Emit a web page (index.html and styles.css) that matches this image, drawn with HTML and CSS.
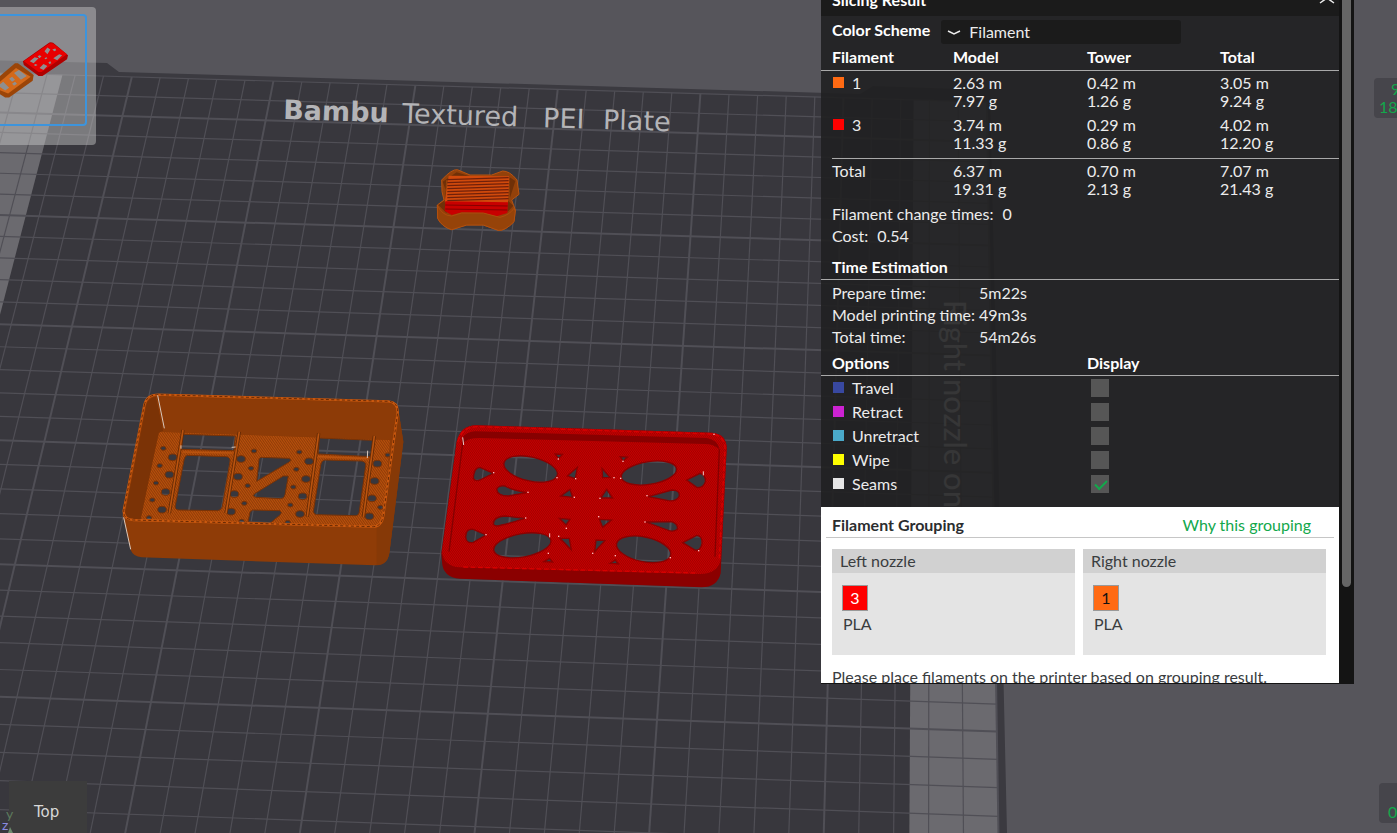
FILE: index.html
```html
<!DOCTYPE html>
<html lang="en">

<head>
    <meta charset="UTF-8">
    <meta name="viewport" content="width=device-width, initial-scale=1.0">
    <title>Slicing preview</title>
    <link rel="stylesheet" href="styles.css">
</head>

<body>
    <main class="preview">
        <svg class="scene" viewBox="0 0 1397 833" preserveAspectRatio="xMinYMin slice" aria-hidden="true">
            <defs>
                <pattern id="hatchOrange" width="6" height="6" patternUnits="userSpaceOnUse" patternTransform="rotate(-35)">
                    <rect width="6" height="6" fill="#b9500c" />
                    <rect width="2" height="6" fill="#7b3306" />
                </pattern>
                <pattern id="hatchRed" width="5" height="5" patternUnits="userSpaceOnUse" patternTransform="rotate(-35)">
                    <rect width="5" height="5" fill="#c80000" />
                    <rect width="2" height="5" fill="#960000" />
                </pattern>
                <g id="caseHoles">
                    <path d="M218 163 L376 168 L372 212 L214 208 Z" />
                    <path d="M232 226 L350 230 Q362 232 360 245 L337 380 Q334 392 322 392 L205 390 Q193 388 196 376 L222 240 Q224 228 232 226 Z" />
                    <path d="M628 174 L790 181 L784 230 L624 222 Z" />
                    <path d="M645 240 L755 243 Q770 246 767 258 L748 395 Q746 408 734 407 L620 404 Q608 402 611 388 L632 255 Q635 241 645 240 Z" />
                    <path d="M452 232 L535 235 Q548 238 538 246 L440 304 L447 238 Z" />
                    <path d="M535 288 L525 345 Q523 356 512 356 L438 352 Q424 348 436 340 L520 288 Z" />
                    <path d="M428 390 L510 392 Q518 398 510 405 L480 430 L414 426 L420 396 Z" />
                </g>
                <g id="caseDots"></g>
                <g id="lidHoles">
                    <ellipse cx="302" cy="177" rx="82" ry="36" transform="rotate(13 302 177)" />
                    <ellipse cx="657" cy="189" rx="84" ry="34" transform="rotate(-9 657 189)" />
                    <ellipse cx="277" cy="406" rx="87" ry="35" transform="rotate(-10 277 406)" />
                    <ellipse cx="641" cy="418" rx="83" ry="37" transform="rotate(12 641 418)" />
                    <path d="M130 205 Q132 172 150 172 L190 190 L150 210 Q135 215 130 205 Z" />
                    <path d="M200 238 Q205 225 225 228 Q245 240 290 248 L235 258 Q202 258 200 238 Z" />
                    <path d="M190 342 Q190 320 225 318 L285 325 Q240 340 215 345 Q195 352 190 342 Z" />
                    <path d="M107 380 Q107 355 130 358 L168 375 L130 397 Q108 402 107 380 Z" />
                    <path d="M770 210 L810 190 Q828 195 826 215 Q820 235 800 232 Z" />
                    <path d="M655 260 L725 240 Q750 240 748 258 Q740 275 715 272 Z" />
                    <path d="M648 336 L725 335 Q745 342 742 358 Q730 368 712 360 Z" />
                    <path d="M758 398 L800 376 Q818 378 816 400 Q812 424 795 420 Z" />
                    <path d="M375 132 L397 133 L386 146 Z" />
                    <path d="M412 198 L442 172 L436 206 Z" />
                    <path d="M516 175 L540 202 L518 203 Z" />
                    <path d="M570 140 L592 141 L580 153 Z" />
                    <path d="M392 258 L420 238 L428 262 Z" />
                    <path d="M512 264 L530 238 L548 264 Z" />
                    <path d="M388 325 L420 328 L408 345 Z" />
                    <path d="M508 328 L545 330 L518 352 Z" />
                    <path d="M390 385 L418 385 L424 420 Z" />
                    <path d="M498 390 L525 392 L494 425 Z" />
                    <path d="M342 455 L358 445 L368 456 Z" />
                    <path d="M540 460 L556 450 L565 462 Z" />
                </g>
                <mask id="caseMask" maskUnits="userSpaceOnUse" x="0" y="0" width="930" height="600">
                    <rect width="930" height="600" fill="#fff" />
                    <use href="#caseHoles" fill="#000" />
                    <use href="#caseDots" fill="#000" />
                </mask>
                <mask id="lidMask" maskUnits="userSpaceOnUse" x="0" y="0" width="930" height="570">
                    <rect width="930" height="570" fill="#fff" />
                    <use href="#lidHoles" fill="#000" />
                </mask>
            </defs>

            <!-- build plate -->
            <path class="plate-edge" d="M-20 60 L107 63 L119 72 L420 81 L860 94 L873 86 L990 90 L1007 833 L-20 833 Z" />
            <g id="plate"></g>
            <g class="plate-name" transform="rotate(1.8 283 119)">
                <text x="283" y="119" class="plate-brand">Bambu</text>
                <text x="402" y="119">Textured</text>
                <text x="543" y="119">PEI</text>
                <text x="603" y="119">Plate</text>
            </g>
            <text class="zone-name" transform="translate(944 300) rotate(90)">Right nozzle on</text>

            <!-- prime tower -->
            <svg x="420" y="155" width="120" height="90" viewBox="0 0 360 270">
                <path fill="#93410a" stroke="#b9530f" stroke-width="3" d="M65 75 Q95 42 112 44 L150 60 L215 60 L248 48 Q270 48 291 75 L297 118 L275 135 L286 165 L282 200 Q255 228 235 226 L190 210 L140 210 L95 224 Q65 215 53 190 L52 150 L72 135 L66 110 Z" />
                <path fill="#6f3008" d="M68 80 L110 52 L150 64 L78 76 L76 135 L55 150 L80 175 L78 108 Z M268 66 L286 78 L270 128 Z M262 135 L280 152 L262 172 Z" />
                <path fill="#d04a0c" d="M86 62 L268 64 L264 145 L74 142 Z" />
                <g id="towerLines" stroke="#70200a" stroke-width="4"></g>
                <path fill="#c80000" d="M76 139 L264 142 L262 174 L230 184 L190 173 L125 172 L95 180 L74 168 Z" />
                <path stroke="#850000" stroke-width="3" d="M76 150 L263 153 M76 162 L262 165" />
                <path fill="#964309" stroke="#b9530f" stroke-width="2" d="M52 150 Q66 182 95 183 L125 174 L190 174 L240 187 Q268 180 282 160 L286 168 L282 200 Q255 228 235 226 L190 210 L140 210 L95 224 Q65 215 53 190 Z" />
            </svg>

            <!-- case, filament 1 -->
            <svg x="110" y="380" width="310" height="200" viewBox="0 0 930 600">
                <g mask="url(#caseMask)">
                    <path fill="#8f3c07" d="M103 75 Q110 42 145 42 L835 62 Q866 64 866 95 L880 185 L838 520 Q832 556 795 556 L95 532 Q70 530 62 510 L38 405 Z" />
                    <path fill="url(#hatchOrange)" d="M148 156 L840 180 L822 410 Q812 442 780 440 L85 419 Z" />
                    <path fill="#7b3306" d="M108 80 Q112 52 138 50 L160 152 L146 158 L92 419 L60 416 Q44 412 46 395 Z" />
                    <path fill="#8d3b07" d="M138 50 L835 68 Q858 72 856 100 L846 180 L160 155 Z" />
                    <path fill="#863907" d="M866 95 L880 185 L838 520 Q832 556 800 556 L800 442 Q822 436 825 405 Z" />
                </g>
                <g fill="none" stroke="#7a3205" stroke-width="3">
                    <use href="#caseHoles" />
                    <use href="#caseDots" />
                </g>
                <path fill="none" stroke="#642a05" stroke-width="10" d="M219 150 L178 400 M388 155 L348 400 M626 160 L592 410 M793 168 L760 412" />
                <path fill="none" stroke="#b9530f" stroke-width="5" d="M219 150 L178 400 M388 155 L348 400 M626 160 L592 410 M793 168 L760 412 M218 216 L368 219 M624 230 L775 236" />
                <path fill="none" stroke="#c9580f" stroke-width="7" d="M103 75 Q110 44 145 44 L835 64 Q864 66 863 98 L820 405 Q815 442 785 440 L70 420 Q40 418 41 392 Z" />
                <path fill="none" stroke="#6a2b04" stroke-width="3" stroke-dasharray="9 7" d="M103 75 Q110 44 145 44 L835 64 Q864 66 863 98 L820 405 Q815 442 785 440 L70 420 Q40 418 41 392 Z" />
                <path fill="none" stroke="#d8c8bd" stroke-width="3" d="M143 46 L163 145 M41 412 L62 508 M213 196 L213 206 M773 212 L772 234 M365 202 L377 201" />
            </svg>

            <!-- lid, filament 3 -->
            <svg x="430" y="410" width="310" height="190" viewBox="0 0 930 570">
                <g mask="url(#lidMask)">
                    <path fill="#8b0000" d="M80 95 Q92 46 140 46 L845 68 Q890 72 890 115 L872 490 Q862 532 815 532 L90 506 Q38 502 36 455 L34 430 Z" />
                    <path fill="url(#hatchRed)" d="M80 95 Q92 46 140 46 L845 68 Q890 72 890 115 L873 445 Q865 492 810 492 L90 472 Q40 468 36 425 Z" />
                    <path fill="#870000" d="M97 86 Q105 66 135 64 L830 84 Q865 90 868 118 Q850 102 825 102 L150 84 Q110 84 100 100 Z" />
                    <path fill="none" stroke="#850000" stroke-width="4" d="M100 84 L57 425 M868 118 L855 440" />
                    <path fill="none" stroke="#d80000" stroke-width="4" stroke-dasharray="14 8" d="M84 95 Q96 50 142 50 L843 72 Q884 76 885 115 L868 445 M100 471 L800 489" />
                </g>
                <use href="#lidHoles" fill="none" stroke="#8c0000" stroke-width="4" />
                <path fill="none" stroke="#ecc" stroke-width="3" d="M98 82 L101 105 M820 184 L820 196 M359 370 L359 382" />
                <g id="lidSeams" fill="#fbb"></g>
            </svg>
        </svg>

        <button class="plate-thumb" type="button" aria-label="Plate 1">
            <svg viewBox="0 0 86 110" width="86" height="110">
                <path fill="#b00000" d="M23 46 L50 27 Q53 26 56 29 L69 40 L68 44 L43 61 L39 61 L24 50 Z" />
                <path fill="#e80000" d="M24 46 L50 28 Q53 27 55 29 L68 39 L42 57 L39 57 Z" />
                <path fill="#8f8f90" d="M30 46 l5 -4 4 1 -5 5z M45 36 l3 -4 3 2 -3 5z M54 43 l6 -4 3 1 -5 5z M40 53 l4 -4 4 2 -4 4z M38 41 l2 -1 2 1 -2 2z M49 47 l2 -1 1 2 -2 1z M53 34 l3 -1 1 2 -2 1z M34 50 l2 -1 2 1 -2 1z M45 43 l2 -1 1 1 -2 1z" />
                <path fill="#9b4508" d="M-6 66 L15 48 L18 48 L34 60 L33 66 L9 83 L5 83 L-6 76 Z" />
                <path fill="#d4691a" d="M-4 70 L16 53 L31 62 L8 79 L-4 74 Z" />
                <path fill="#8f8f90" d="M14 58 L19 55 L27 61 L21 65 Z M-2 71 L3 67 L9 73 L5 76 Z M9 64 l3 -2 3 3 -3 2z M12 69 l3 -2 2 2 -3 2z" />
            </svg>
        </button>

        <div class="view-cube">Top</div>
        <svg class="axes" viewBox="0 0 16 24" width="16" height="24" aria-hidden="true">
            <text x="6" y="10" fill="#5d7a5d">y</text>
            <text x="2" y="21" fill="#8a8ae0">z</text>
            <path d="M10 18 L13 24 L8 24 Z" fill="#6d8a6d" />
        </svg>

        <output class="layer-box layer-top"><span>9</span><span>18</span></output>
        <output class="layer-box layer-bottom"><span>0</span></output>

        <aside class="panel">
            <div class="panel-body">
                <header class="panel-head">
                    <h2>Slicing Result</h2>
                    <button type="button" aria-label="Collapse">
                        <svg viewBox="0 0 16 8" width="16" height="8"><path d="M1 7 L8 2 L15 7" /></svg>
                    </button>
                </header>

                <div class="scheme">
                    <label for="scheme">Color Scheme</label>
                    <div class="scheme-select">
                        <svg viewBox="0 0 14 6" width="14" height="6"><path d="M1 1 L7 4 L13 1" /></svg>
                        <select id="scheme">
                            <option>Filament</option>
                        </select>
                    </div>
                </div>

                <table class="usage">
                    <thead>
                        <tr>
                            <th>Filament</th>
                            <th>Model</th>
                            <th>Tower</th>
                            <th>Total</th>
                        </tr>
                    </thead>
                    <tbody>
                        <tr>
                            <td><i class="swatch orange"></i>1</td>
                            <td>2.63 m<br>7.97 g</td>
                            <td>0.42 m<br>1.26 g</td>
                            <td>3.05 m<br>9.24 g</td>
                        </tr>
                        <tr>
                            <td><i class="swatch red"></i>3</td>
                            <td>3.74 m<br>11.33 g</td>
                            <td>0.29 m<br>0.86 g</td>
                            <td>4.02 m<br>12.20 g</td>
                        </tr>
                    </tbody>
                    <tfoot>
                        <tr>
                            <td>Total</td>
                            <td>6.37 m<br>19.31 g</td>
                            <td>0.70 m<br>2.13 g</td>
                            <td>7.07 m<br>21.43 g</td>
                        </tr>
                    </tfoot>
                </table>

                <dl class="facts">
                    <div><dt>Filament change times:</dt><dd>0</dd></div>
                    <div><dt>Cost:</dt><dd>0.54</dd></div>
                </dl>

                <h3 class="section-title">Time Estimation</h3>
                <dl class="times">
                    <dt>Prepare time:</dt>
                    <dd>5m22s</dd>
                    <dt>Model printing time:</dt>
                    <dd>49m3s</dd>
                    <dt>Total time:</dt>
                    <dd>54m26s</dd>
                </dl>

                <div class="section-title options-title">
                    <h3>Options</h3>
                    <h3>Display</h3>
                </div>
                <div class="options">
                    <label><i class="swatch travel"></i>Travel<input type="checkbox"></label>
                    <label><i class="swatch retract"></i>Retract<input type="checkbox"></label>
                    <label><i class="swatch unretract"></i>Unretract<input type="checkbox"></label>
                    <label><i class="swatch wipe"></i>Wipe<input type="checkbox"></label>
                    <label><i class="swatch seams"></i>Seams<input type="checkbox" checked></label>
                </div>

                <section class="grouping">
                    <div class="grouping-head">
                        <h3>Filament Grouping</h3>
                        <a href="#">Why this grouping</a>
                    </div>
                    <div class="nozzles">
                        <div class="nozzle">
                            <h4>Left nozzle</h4>
                            <span class="slot red">3</span>
                            <p>PLA</p>
                        </div>
                        <div class="nozzle">
                            <h4>Right nozzle</h4>
                            <span class="slot orange">1</span>
                            <p>PLA</p>
                        </div>
                    </div>
                    <p class="note">Please place filaments on the printer based on grouping result.</p>
                </section>
            </div>
            <div class="scroll-track">
                <div class="scroll-thumb"></div>
            </div>
        </aside>
    </main>

    <script src="scene.js"></script>
</body>

</html>
```
FILE: styles.css
```css
* {
    box-sizing: border-box;
}

body {
    margin: 0;
    font-family: Lato, "Noto Sans", sans-serif;
    font-size: 16px;
    line-height: 18px;
    color: #ececec;
    background-color: #56555b;
}

h2, h3, h4, p, dl, dd {
    margin: 0;
}

h2, h3 {
    font-size: 16px;
    color: #fff;
}

/* 3D view */
.preview {
    position: relative;
    height: 100vh;
    overflow: hidden;
}

.scene {
    display: block;
    width: 100%;
    height: 100%;
}

.plate-edge {
    fill: #3b3a40;
}

.plate-top {
    fill: #38373d;
}

.plate-strip {
    fill: #6b6a6f;
}

.grid-line {
    stroke: #504f56;
    stroke-width: 1.2;
}

.grid-line.major {
    stroke-width: 2;
}

.plate-name {
    fill: #b4b4b7;
    font-family: "DejaVu Sans", sans-serif;
    font-size: 27px;
}

.plate-brand {
    font-weight: bold;
}

.zone-name {
    fill: #fff;
    font-size: 31px;
}

.plate-thumb {
    position: absolute;
    top: 7px;
    left: 0;
    padding: 7px 9px 19px 0;
    border: none;
    border-radius: 0 4px 4px 0;
    background-color: rgba(205, 205, 205, 0.45);
}

.plate-thumb svg {
    display: block;
    box-sizing: content-box;
    width: 85px;
    height: 108px;
    border: 2px solid #3d94dc;
    border-left: none;
    border-radius: 0 4px 4px 0;
}

.view-cube {
    position: absolute;
    left: 9px;
    bottom: 0;
    padding: 22px 28px 12px 25px;
    background-color: #3c3c3c;
    color: #d8d8d8;
    font-family: "DejaVu Sans", sans-serif;
    font-size: 15px;
}

.axes {
    position: absolute;
    left: 0;
    bottom: 0;
    font-size: 14px;
}

.layer-box {
    position: absolute;
    display: flex;
    flex-direction: column;
    justify-content: flex-end;
    height: 40px;
    padding: 2px;
    border-radius: 4px;
    background-color: #46454b;
    color: #12a84b;
}

.layer-top {
    top: 78px;
    right: -23px;
    width: 46px;
    padding-left: 5px;
}

.layer-top span:first-child {
    padding-left: 12px;
}

.layer-bottom {
    right: -14px;
    bottom: 10px;
    width: 32px;
    padding-left: 9px;
}

/* result panel */
.panel {
    position: absolute;
    top: 0;
    right: 43px;
    bottom: 149px;
    display: flex;
    width: 533px;
    overflow: hidden;
    border-bottom: 1px solid #141414;
}

.panel-body {
    flex: 1;
    background-color: rgba(32, 32, 33, 0.9);
}

.scroll-track {
    width: 15px;
    padding: 0 3px;
    background-color: #141414;
}

.scroll-thumb {
    height: 86%;
    border-radius: 0 0 5px 5px;
    background-color: #666;
}

.panel-head {
    display: flex;
    align-items: center;
    justify-content: space-between;
    height: 32px;
    margin-top: -16px;
    padding: 0 4px 0 11px;
    background-color: #1b1b1b;
}

.panel-head button {
    padding: 0;
    border: none;
    background: none;
}

.panel svg {
    display: block;
    fill: none;
    stroke: #ececec;
    stroke-width: 1.5;
}

.scheme {
    display: flex;
    gap: 11px;
    height: 29px;
    padding: 4px 11px 1px;
}

.scheme label {
    line-height: 19px;
    font-weight: bold;
    color: #fff;
}

.scheme-select {
    position: relative;
    width: 240px;
}

.scheme-select svg {
    position: absolute;
    top: 10px;
    left: 6px;
}

.scheme select {
    appearance: none;
    width: 100%;
    height: 24px;
    padding: 0 0 0 28px;
    border: none;
    border-radius: 3px;
    background-color: #1b1b1b;
    color: #ececec;
    font: inherit;
}

.usage {
    width: 100%;
    table-layout: fixed;
    border-collapse: collapse;
}

.usage th {
    height: 25px;
    padding: 0;
    border-bottom: 1px solid #a9a9a9;
    color: #fff;
    text-align: left;
}

.usage th:first-child {
    width: 132px;
}

.usage th:nth-child(2) {
    width: 134px;
}

.usage th:nth-child(3) {
    width: 133px;
}

.usage td {
    padding: 3px 0;
    vertical-align: top;
}

.usage tbody tr:last-child td {
    padding-bottom: 6px;
}

.usage th:first-child,
.usage td:first-child {
    padding-left: 11px;
}

.usage tfoot td {
    padding: 4px 0 5px;
    background: linear-gradient(#a9a9a9, #a9a9a9) 0 0 / 100% 1px no-repeat;
}

.usage tfoot td:first-child {
    background-position: 11px 0;
}

.swatch {
    display: inline-block;
    width: 11px;
    height: 11px;
    margin: 0 8px 1px 1px;
}

.orange {
    background-color: #ff6a13;
}

.red {
    background-color: #f00;
}

.travel {
    background-color: #3848a0;
}

.retract {
    background-color: #cc22d2;
}

.unretract {
    background-color: #4aa9c9;
}

.wipe {
    background-color: #ff0;
}

.seams {
    background-color: #e6e6e6;
}

.facts,
.times {
    padding-left: 11px;
    line-height: 22px;
}

.facts div {
    display: flex;
    gap: 9px;
}

.section-title {
    margin-top: 8px;
    padding-left: 11px;
    border-bottom: 1px solid #a9a9a9;
    line-height: 24px;
}

.times {
    display: grid;
    grid-template-columns: 147px 1fr;
    padding-top: 2px;
}

.options-title {
    display: grid;
    grid-template-columns: 255px 1fr;
    margin-top: 3px;
}

.options {
    padding-bottom: 11px;
}

.options label {
    display: flex;
    align-items: center;
    position: relative;
    height: 24px;
    padding-left: 11px;
}

.options input {
    appearance: none;
    position: absolute;
    left: 270px;
    width: 18px;
    height: 18px;
    margin: 0;
    background-color: #565656;
}

.options input:checked::after {
    content: "";
    position: absolute;
    top: 5px;
    left: 4px;
    width: 10px;
    height: 5px;
    border-left: 2px solid #12a84b;
    border-bottom: 2px solid #12a84b;
    transform: rotate(-45deg);
}

.grouping {
    height: 200px;
    background-color: #fff;
    color: #3a3d3f;
}

.grouping-head {
    display: flex;
    justify-content: space-between;
    margin: 0 5px;
    padding: 6px 23px 0 6px;
    border-bottom: 1px solid #c6c6c6;
    line-height: 24px;
}

.grouping-head h3 {
    color: #2b2d2f;
}

.grouping-head a {
    color: #12a84b;
    text-decoration: none;
}

.nozzles {
    display: flex;
    gap: 8px;
    margin: 11px 13px 11px 11px;
}

.nozzle {
    flex: 1;
    height: 106px;
    background-color: #e4e4e4;
}

.nozzle h4 {
    padding: 0 8px;
    background-color: #d1d1d1;
    font-size: 16px;
    font-weight: normal;
    line-height: 24px;
}

.slot {
    display: block;
    width: 26px;
    height: 26px;
    margin: 12px 0 4px 10px;
    border: 1px solid #999;
    text-align: center;
    line-height: 24px;
}

.slot.red {
    color: #fff;
}

.slot.orange {
    color: #111;
}

.nozzle p {
    padding-left: 11px;
}

.note {
    padding-left: 11px;
    line-height: 22px;
}
```
FILE: scene.js
```js
const SVG_NS = 'http://www.w3.org/2000/svg';

// four plate points on screen, at (1,1) (4,1) (4,5) (1,5) in major grid cells
const quad = [[245.5, 222.6], [690.5, 236.3], [657, 719.7], [151, 702]];

function add(parent, tag, attrs) {
    const el = document.createElementNS(SVG_NS, tag);
    for (const key in attrs) {
        el.setAttribute(key, attrs[key]);
    }
    parent.appendChild(el);
}

// grid cell -> screen position, with perspective
function project(u, v) {
    const [[x0, y0], [x1, y1], [x2, y2], [x3, y3]] = quad;
    const s = (u - 1) / 3;
    const t = (v - 1) / 4;
    const dx1 = x1 - x2, dx2 = x3 - x2, sx = x0 - x1 + x2 - x3;
    const dy1 = y1 - y2, dy2 = y3 - y2, sy = y0 - y1 + y2 - y3;
    const det = dx1 * dy2 - dx2 * dy1;
    const g = (sx * dy2 - dx2 * sy) / det;
    const h = (dx1 * sy - sx * dy1) / det;
    const w = g * s + h * t + 1;
    const x = ((x1 - x0 + g * x1) * s + (x3 - x0 + h * x3) * t + x0) / w;
    const y = ((y1 - y0 + g * y1) * s + (y3 - y0 + h * y3) * t + y0) / w;
    return [x.toFixed(1), y.toFixed(1)];
}

function drawPlate() {
    const plate = document.getElementById('plate');
    const top = -0.4, bottom = 6.4;

    function area(from, to, name) {
        const points = [project(from, top), project(to, top), project(to, bottom), project(from, bottom)];
        add(plate, 'polygon', { points: points.join(' '), class: name });
    }

    function line(a, b, major) {
        add(plate, 'line', { x1: a[0], y1: a[1], x2: b[0], y2: b[1], class: major ? 'grid-line major' : 'grid-line' });
    }

    area(-1, 6, 'plate-top');
    area(-1, -0.49, 'plate-strip');
    area(5.49, 6, 'plate-strip');

    for (let i = -5; i <= 30; i++) {
        line(project(i / 5, top), project(i / 5, bottom), i % 5 === 0);
    }
    for (let i = -2; i <= 32; i++) {
        line(project(-1, i / 5), project(6, i / 5), i % 5 === 0);
    }
}

function drawCaseDots() {
    const dots = document.getElementById('caseDots');
    const big = [[188, 232], [178, 284], [167, 336], [156, 389], [393, 237], [384, 290], [373, 342], [363, 395],
        [597, 244], [588, 297], [578, 349], [570, 402], [802, 251], [794, 303], [786, 355], [778, 409]];
    const small = [[160, 205], [149, 257], [138, 309], [127, 360], [117, 413], [432, 213], [423, 265], [413, 317],
        [403, 370], [395, 424], [568, 216], [559, 268], [550, 321], [541, 375], [533, 427], [833, 225], [811, 382]];
    big.forEach(([cx, cy]) => add(dots, 'ellipse', { cx, cy, rx: 13, ry: 10 }));
    small.forEach(([cx, cy]) => add(dots, 'ellipse', { cx, cy, rx: 8, ry: 6 }));
}

function drawTowerLines() {
    const lines = document.getElementById('towerLines');
    for (let y = 70; y < 142; y += 9) {
        add(lines, 'line', { x1: 82, y1: y + 4, x2: 266, y2: y - 2 });
    }
}

function drawLidSeams() {
    const seams = document.getElementById('lidSeams');
    const points = [[191, 188], [381, 203], [437, 206], [552, 203], [572, 205], [294, 247], [433, 262], [510, 265],
        [651, 257], [287, 324], [506, 320], [409, 355], [645, 336], [168, 374], [386, 379], [355, 430], [488, 430],
        [556, 437], [721, 443], [806, 422], [852, 73], [579, 154], [385, 147]];
    points.forEach(([x, y]) => add(seams, 'rect', { x: x - 2, y: y - 2, width: 4, height: 4 }));
}

drawPlate();
drawCaseDots();
drawTowerLines();
drawLidSeams();
```
